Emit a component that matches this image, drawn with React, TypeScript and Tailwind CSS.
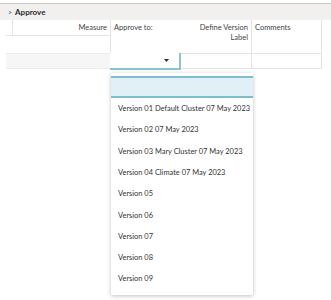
import React from "react";

const items = [
  "Version 01 Default Cluster 07 May 2023",
  "Version 02 07 May 2023",
  "Version 03 Mary Cluster 07 May 2023",
  "Version 04 Climate 07 May 2023",
  "Version 05",
  "Version 06",
  "Version 07",
  "Version 08",
  "Version 09",
];

export default function App() {
  return (
    <div
      className="relative w-[331px] h-[300px] overflow-hidden bg-white text-[#333]"
      style={{ fontFamily: "Lato, 'Open Sans', sans-serif" }}
    >
      <div className="pt-[3px]">
        <div className="flex h-[17px] items-center border-t border-[#c9c9c9] bg-[#f1f0ee] pl-[8px] text-[8px] font-bold text-[#2a2a2a]">
          <span className="mr-[3px] text-[7px] text-[#4a7fa0]">&gt;</span>
          <span>Approve</span>
        </div>
      </div>

      <div className="ml-[6px] flex w-[316px] text-[7.5px] leading-[10px] text-[#444]">
        {/* left group */}
        <div className="flex w-[104px] flex-col">
          <div className="flex h-[16px] border-b border-[#e4e4e4]">
            <div className="w-[7px] border-r border-[#e4e4e4]" />
            <div className="flex-1 pr-[3px] pt-[3px] text-right">Measure</div>
          </div>
          <div className="h-[17px]" />
          <div className="h-[16px] border-y border-[#ececec] bg-[#f6f6f6]" />
        </div>
        {/* approve to */}
        <div className="flex w-[71px] flex-col">
          <div className="h-[33px] border-l border-[#e4e4e4] pl-[3px] pt-[3px]">Approve to:</div>
          <div className="flex h-[17px] items-center justify-end border-b-2 border-r-2 border-[#8cc3d3] bg-white pr-[10px]">
            <svg width="5" height="3" viewBox="0 0 5 3">
              <path d="M0 0 L5 0 L2.5 3 Z" fill="#333" />
            </svg>
          </div>
        </div>
        {/* define version label */}
        <div className="flex w-[71px] flex-col">
          <div className="h-[33px] border-r border-[#e4e4e4] pr-[3px] pt-[3px] text-right">
            Define Version
            <br />
            Label
          </div>
          <div className="h-[16px] border-y border-r border-[#e4e4e4]" />
        </div>
        {/* comments */}
        <div className="flex w-[70px] flex-col">
          <div className="h-[33px] border-r border-[#e4e4e4] pl-[3px] pt-[3px]">Comments</div>
          <div className="h-[16px] border-y border-r border-[#e4e4e4]" />
        </div>
      </div>

      {/* dropdown */}
      <div className="absolute left-[111px] top-[73px] h-[222px] w-[142px] bg-white pt-[3px] shadow-[0_1px_4px_rgba(0,0,0,0.25)]">
        <div className="h-[22px] border-y-2 border-[#7fbccd] bg-[#e1f0f6]" />
        {items.map((t) => (
          <div key={t} className="flex h-[21.3px] items-center whitespace-nowrap pl-[7px] text-[7.45px] text-[#333]">
            {t}
          </div>
        ))}
      </div>
    </div>
  );
}
